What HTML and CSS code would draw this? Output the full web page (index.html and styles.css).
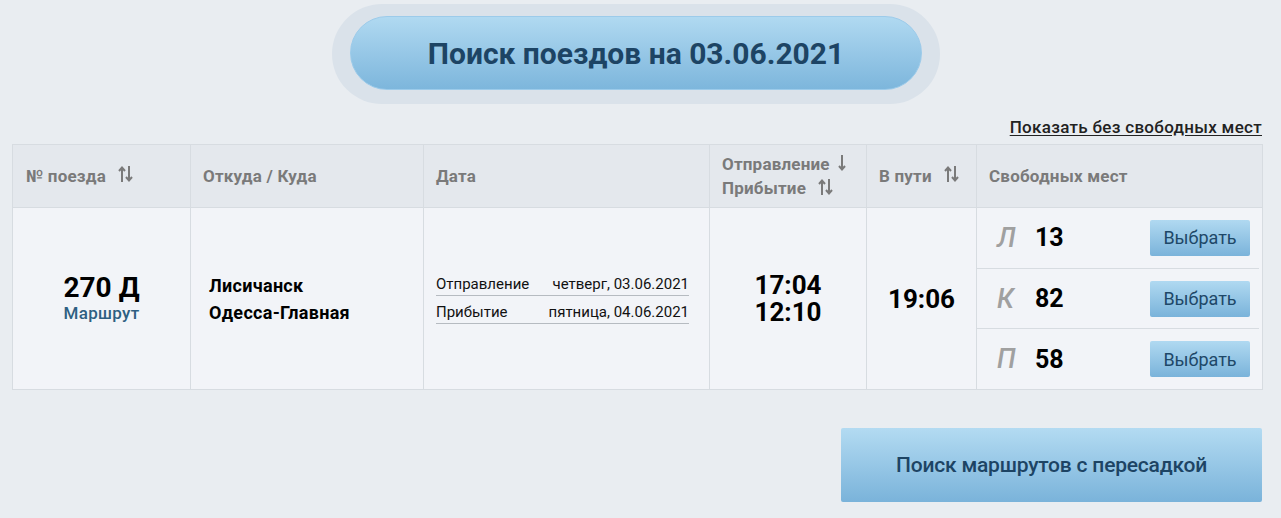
FILE: index.html
```html
<!DOCTYPE html>
<html lang="ru">
<head>
<meta charset="utf-8">
<link rel="stylesheet" href="styles.css">
</head>
<body>
<div class="page">
  <div class="title-wrap">
    <div class="title-pill">
      <div class="title-btn">Поиск поездов на 03.06.2021</div>
    </div>
  </div>
  <div class="link-row"><a class="show-link" href="#">Показать без свободных мест</a></div>
  <table class="trains">
    <colgroup>
      <col class="c1"><col class="c2"><col class="c3"><col class="c4"><col class="c5"><col class="c6">
    </colgroup>
    <thead>
      <tr>
        <th class="first"><span class="th-in">№ поезда <svg class="sort" viewBox="0 0 16 18"><path d="M4 17V3M1 6l3-3.5L7 6" /><path d="M11 1v14M8 12l3 3.5 3-3.5" /></svg></span></th>
        <th>Откуда / Куда</th>
        <th>Дата</th>
        <th class="th-two">
          <div class="th-line">Отправление <svg class="sort single" viewBox="0 0 8 18"><path d="M4 1v14M1 12l3 3.5 3-3.5" /></svg></div>
          <div class="th-line">Прибытие <svg class="sort" viewBox="0 0 16 18"><path d="M4 17V3M1 6l3-3.5L7 6" /><path d="M11 1v14M8 12l3 3.5 3-3.5" /></svg></div>
        </th>
        <th><span class="th-in">В пути <svg class="sort" viewBox="0 0 16 18"><path d="M4 17V3M1 6l3-3.5L7 6" /><path d="M11 1v14M8 12l3 3.5 3-3.5" /></svg></span></th>
        <th>Свободных мест</th>
      </tr>
    </thead>
    <tbody>
      <tr>
        <td class="num">
          <div class="train-no">270 Д</div>
          <div class="route">Маршрут</div>
        </td>
        <td class="cities">
          <div>Лисичанск</div>
          <div>Одесса-Главная</div>
        </td>
        <td class="dates">
          <div class="date-row"><span>Отправление</span><span>четверг, 03.06.2021</span></div>
          <div class="date-row"><span>Прибытие</span><span>пятница, 04.06.2021</span></div>
        </td>
        <td class="times">17:04<br>12:10</td>
        <td class="dur">19:06</td>
        <td class="seats">
          <div class="seat-list">
            <div class="seat"><span class="seat-type">Л</span><span class="seat-num">13</span><button class="pick">Выбрать</button></div>
            <div class="seat"><span class="seat-type">К</span><span class="seat-num">82</span><button class="pick">Выбрать</button></div>
            <div class="seat"><span class="seat-type">П</span><span class="seat-num">58</span><button class="pick">Выбрать</button></div>
          </div>
        </td>
      </tr>
    </tbody>
  </table>
  <div class="bottom-row"><button class="transfer">Поиск маршрутов с пересадкой</button></div>
</div>
</body>
</html>
```

FILE: styles.css
```css
html, body {
  margin: 0;
  padding: 0;
  background: #e9edf1;
  font-family: Roboto, "Liberation Sans", Arial, sans-serif;
}
.page {
  padding: 0 19px 0 12px;
}
.title-wrap {
  padding-top: 4px;
  padding-left: 320px;
}
.title-pill {
  width: 572px;
  height: 76px;
  padding: 12px 18px;
  background: #dae2ea;
  border-radius: 50px;
}
.title-btn {
  height: 72px;
  border: 1px solid #9ccbea;
  border-radius: 37px;
  background: linear-gradient(#b0d9f1, #7db6dc);
  color: #1d4464;
  font-size: 30px;
  font-weight: 700;
  display: flex;
  align-items: center;
  justify-content: center;
}
.link-row {
  display: flex;
  justify-content: flex-end;
  padding-top: 13px;
  height: 27px;
  width: 1250px;
}
.show-link {
  color: #222;
  font-size: 17px;
  font-weight: 500;
  letter-spacing: 0.3px;
  text-decoration: underline;
  text-underline-offset: 2px;
  line-height: 20px;
}
.trains {
  width: 1250px;
  border-collapse: collapse;
  table-layout: fixed;
}
.c1 { width: 178px; }
.c2 { width: 233px; }
.c3 { width: 286px; }
.c4 { width: 157px; }
.c5 { width: 110px; }
.c6 { width: 286px; }
.trains th, .trains td {
  border: 1px solid #d7dce1;
  padding: 0;
}
.trains th {
  background: #e4e8ed;
  height: 62px;
  text-align: left;
  color: #7a7a7a;
  font-size: 17px;
  font-weight: 700;
  letter-spacing: 0.2px;
  padding-left: 12px;
  vertical-align: middle;
}
.trains th.first { padding-left: 13px; }
.th-in {
  display: inline-flex;
  align-items: center;
}
.sort {
  width: 16px;
  height: 18px;
  margin-left: 12px;
  fill: none;
  stroke: #7a7a7a;
  stroke-width: 2;
  position: relative;
  top: -2px;
}
.sort.single {
  width: 8px;
  margin-left: 8px;
}
.trains th.th-two {
  line-height: 24px;
}
.th-line {
  display: flex;
  align-items: center;
}
.th-line .sort { top: -1px; }
.trains td {
  background: #f2f4f8;
  height: 181px;
  vertical-align: middle;
}
.num {
  text-align: center;
}
.train-no {
  font-size: 28px;
  font-weight: 700;
  color: #000;
  line-height: 28px;
}
.route {
  font-size: 17px;
  font-weight: 500;
  letter-spacing: 0.3px;
  color: #2e5f82;
  line-height: 22px;
}
.trains td.cities {
  padding-left: 18px;
  font-size: 18px;
  font-weight: 700;
  letter-spacing: 0.3px;
  color: #000;
  line-height: 27px;
}
.trains td.dates {
  padding: 0 20px 0 12px;
}
.date-row {
  display: flex;
  justify-content: space-between;
  font-size: 15px;
  color: #111;
  border-bottom: 1px solid #b6bbc1;
  height: 21px;
  line-height: 20px;
  margin-top: 6px;
}
.date-row:first-child { margin-top: 0; }
.times {
  text-align: center;
  font-size: 26px;
  font-weight: 700;
  color: #000;
  line-height: 27px;
}
.dur {
  text-align: center;
  font-size: 26px;
  font-weight: 700;
  color: #000;
}
.trains td.seats {
  padding: 0;
  vertical-align: top;
}
.seat-list {
  height: 181px;
  display: flex;
  flex-direction: column;
}
.seat {
  flex: 1;
  display: flex;
  align-items: center;
  border-bottom: 1px solid #d7dce1;
  padding-right: 12px;
  margin-right: 3px;
}
.seat:last-child {
  border-bottom: none;
}
.seat-type {
  width: 38px;
  padding-left: 20px;
  font-size: 27px;
  font-style: italic;
  font-weight: 500;
  color: #a0a0a0;
}
.seat-num {
  font-size: 25px;
  font-weight: 700;
  color: #000;
  flex: 1;
}
.pick {
  width: 100px;
  height: 36px;
  border: none;
  border-radius: 2px;
  background: linear-gradient(#b0d9f1, #7ab3da);
  color: #1e4868;
  font-family: Roboto, "Liberation Sans", Arial, sans-serif;
  font-size: 18px;
  font-weight: 400;
  padding: 0;
  margin-right: -3px;
}
.bottom-row {
  display: flex;
  justify-content: flex-end;
  padding-top: 38px;
  width: 1250px;
}
.transfer {
  width: 421px;
  height: 74px;
  border: none;
  border-radius: 2px;
  background: linear-gradient(#b3dbf2, #7ab3da);
  color: #1d4464;
  font-family: Roboto, "Liberation Sans", Arial, sans-serif;
  font-size: 21px;
  font-weight: 500;
  letter-spacing: -0.2px;
  padding: 0;
}
```
